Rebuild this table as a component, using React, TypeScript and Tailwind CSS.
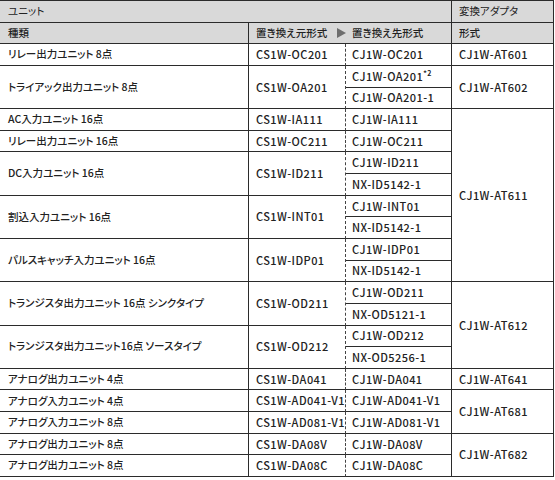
import React from "react";

type Row = {
  name: string;
  src: string;
  dst: { t: string; sup?: string }[];
  adapter?: { t: string; span: number };
};

const rows: Row[] = [
  { name: "リレー出力ユニット 8点", src: "CS1W-OC201", dst: [{ t: "CJ1W-OC201" }], adapter: { t: "CJ1W-AT601", span: 1 } },
  { name: "トライアック出力ユニット 8点", src: "CS1W-OA201", dst: [{ t: "CJ1W-OA201", sup: "*2" }, { t: "CJ1W-OA201-1" }], adapter: { t: "CJ1W-AT602", span: 2 } },
  { name: "AC入力ユニット 16点", src: "CS1W-IA111", dst: [{ t: "CJ1W-IA111" }], adapter: { t: "CJ1W-AT611", span: 8 } },
  { name: "リレー出力ユニット 16点", src: "CS1W-OC211", dst: [{ t: "CJ1W-OC211" }] },
  { name: "DC入力ユニット 16点", src: "CS1W-ID211", dst: [{ t: "CJ1W-ID211" }, { t: "NX-ID5142-1" }] },
  { name: "割込入力ユニット 16点", src: "CS1W-INT01", dst: [{ t: "CJ1W-INT01" }, { t: "NX-ID5142-1" }] },
  { name: "パルスキャッチ入力ユニット 16点", src: "CS1W-IDP01", dst: [{ t: "CJ1W-IDP01" }, { t: "NX-ID5142-1" }] },
  { name: "トランジスタ出力ユニット 16点 シンクタイプ", src: "CS1W-OD211", dst: [{ t: "CJ1W-OD211" }, { t: "NX-OD5121-1" }], adapter: { t: "CJ1W-AT612", span: 4 } },
  { name: "トランジスタ出力ユニット16点 ソースタイプ", src: "CS1W-OD212", dst: [{ t: "CJ1W-OD212" }, { t: "NX-OD5256-1" }] },
  { name: "アナログ出力ユニット 4点", src: "CS1W-DA041", dst: [{ t: "CJ1W-DA041" }], adapter: { t: "CJ1W-AT641", span: 1 } },
  { name: "アナログ入力ユニット 4点", src: "CS1W-AD041-V1", dst: [{ t: "CJ1W-AD041-V1" }], adapter: { t: "CJ1W-AT681", span: 2 } },
  { name: "アナログ入力ユニット 8点", src: "CS1W-AD081-V1", dst: [{ t: "CJ1W-AD081-V1" }] },
  { name: "アナログ出力ユニット 8点", src: "CS1W-DA08V", dst: [{ t: "CJ1W-DA08V" }], adapter: { t: "CJ1W-AT682", span: 2 } },
  { name: "アナログ出力ユニット 8点", src: "CS1W-DA08C", dst: [{ t: "CJ1W-DA08C" }] },
];

const spanClass: Record<number, string> = {
  1: "row-span-1",
  2: "row-span-2",
  4: "row-span-4",
  8: "row-span-8",
};

const startClass: Record<number, string> = {
  3: "row-start-3",
  4: "row-start-4",
  5: "row-start-5",
  6: "row-start-6",
  7: "row-start-7",
  8: "row-start-8",
  9: "row-start-9",
  10: "row-start-10",
  11: "row-start-11",
  12: "row-start-12",
  13: "row-start-13",
  14: "row-start-14",
  15: "row-start-15",
  16: "row-start-16",
  17: "row-start-17",
  18: "row-start-18",
  19: "row-start-19",
  20: "row-start-20",
  21: "row-start-21",
  22: "row-start-22",
};

const B = "border-[#2b2b2b]";

export default function App() {
  let line = 3;
  return (
    <div
      className="w-[555px] h-[480px] bg-white text-[#222] text-[10.5px] leading-none font-medium whitespace-nowrap [font-feature-settings:'palt']"
      style={{ fontFamily: '"Noto Sans CJK JP", "Noto Sans", sans-serif' }}
    >
      <div className={`grid w-[554px] h-[477px] grid-cols-[249px_97px_106px_102px] grid-rows-[repeat(22,minmax(0,1fr))] border-t ${B}`}>
        {/* header row 1 */}
        <div className={`col-span-3 col-start-1 row-start-1 flex items-center pl-[8px] bg-[#d9d9d9] border-b border-r ${B} font-normal`}>
          ユニット
        </div>
        <div className={`col-start-4 row-start-1 flex items-center pl-[7px] bg-[#d9d9d9] border-b border-r ${B} font-normal`}>
          変換アダプタ
        </div>
        {/* header row 2 */}
        <div className={`col-start-1 row-start-2 flex items-center pl-[8px] bg-[#d9d9d9] border-b border-r ${B}`}>
          種類
        </div>
        <div className={`col-span-2 col-start-2 row-start-2 flex items-center pl-[7px] bg-[#d9d9d9] border-b border-r ${B}`}>
          <span className="w-[81px] shrink-0">置き換え元形式</span>
          <svg width="9" height="10" viewBox="0 0 9 10" className="shrink-0">
            <polygon points="0,0 9,5 0,10" fill="#6e6e6e" />
          </svg>
          <span className="ml-[6px]">置き換え先形式</span>
        </div>
        <div className={`col-start-4 row-start-2 flex items-center pl-[7px] bg-[#d9d9d9] border-b border-r ${B}`}>
          形式
        </div>

        {rows.map((r, i) => {
          const start = line;
          const n = r.dst.length;
          line += n;
          return (
            <React.Fragment key={i}>
              <div className={`col-start-1 ${startClass[start]} ${spanClass[n]} flex items-center pl-[8px] border-b border-r ${B}`}>
                {r.name}
              </div>
              <div className={`col-start-2 ${startClass[start]} ${spanClass[n]} flex items-center pl-[7px] border-b ${B} border-r border-r-[#444] border-dashed [border-bottom-style:solid] text-[11px] tracking-[0.04em]`}>
                <span>{r.src}</span>
              </div>
              {r.dst.map((d, j) => (
                <div key={j} className={`col-start-3 ${startClass[start + j]} row-span-1 flex items-center pl-[6px] border-b border-r ${B} text-[11px] tracking-[0.04em]`}>
                  <span>{d.t}</span>
                  {d.sup && <span className="self-start mt-[4px] text-[7px] font-bold leading-none">{d.sup}</span>}
                </div>
              ))}
              {r.adapter && (
                <div className={`col-start-4 ${startClass[start]} ${spanClass[r.adapter.span]} flex items-center pl-[7px] border-b border-r ${B} text-[11px] tracking-[0.04em]`}>
                  <span>{r.adapter.t}</span>
                </div>
              )}
            </React.Fragment>
          );
        })}
      </div>
    </div>
  );
}
